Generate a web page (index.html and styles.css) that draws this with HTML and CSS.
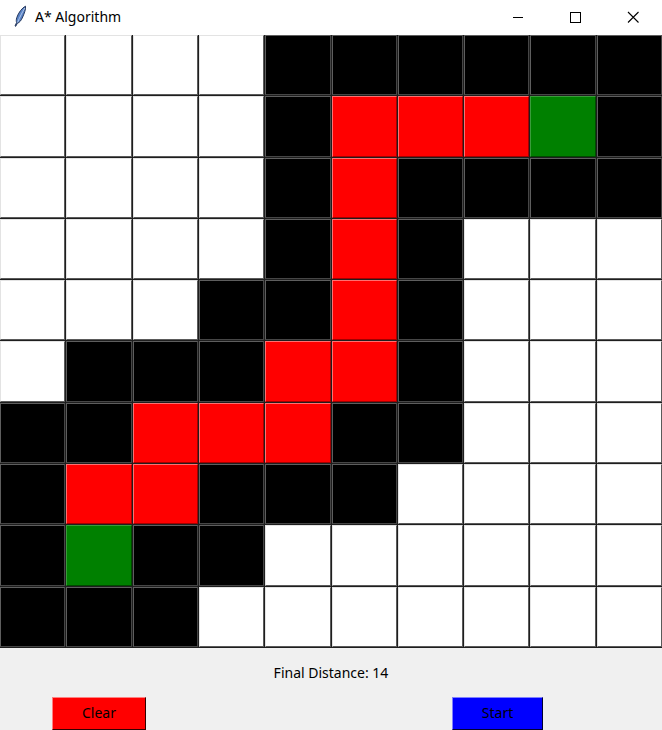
FILE: index.html
```html
<!DOCTYPE html>
<html>
<head>
<meta charset="utf-8">
<title>A* Algorithm</title>
<link rel="stylesheet" href="styles.css">
</head>
<body>
<div class="window">
  <div class="titlebar">
    <svg class="app-icon" width="16" height="22" viewBox="0 0 16 22">
      <path d="M13.5 1.2 C10 3 6.5 7.5 4.8 12.5 C4.1 14.8 4.2 16.5 4.6 17.6 L3 21 L3.7 21.3 L5.4 18.2 C7.4 17.8 9.4 15.2 10.7 12 C12.3 8.2 13.9 4.6 13.5 1.2 Z" fill="#5681c6" stroke="#27385c" stroke-width="1"/>
      <path d="M12.8 3 C10.2 7.5 7.8 12 5.6 17.4" stroke="#c9d8f0" stroke-width="0.8" fill="none"/>
    </svg>
    <span class="title">A* Algorithm</span>
    <div class="controls">
      <span class="ctl"><svg width="12" height="12" viewBox="0 0 12 12"><path d="M1 6.5 H11" stroke="#000" stroke-width="1"/></svg></span>
      <span class="ctl"><svg width="12" height="12" viewBox="0 0 12 12"><rect x="1.5" y="1.5" width="10" height="10" fill="none" stroke="#000" stroke-width="1"/></svg></span>
      <span class="ctl"><svg width="12" height="12" viewBox="0 0 12 12"><path d="M1 1 L11.5 11.5 M11.5 1 L1 11.5" stroke="#000" stroke-width="1.1"/></svg></span>
    </div>
  </div>
  <div class="grid">
    <div class="c w"></div><div class="c w"></div><div class="c w"></div><div class="c w"></div><div class="c b"></div><div class="c b"></div><div class="c b"></div><div class="c b"></div><div class="c b"></div><div class="c b"></div>
    <div class="c w"></div><div class="c w"></div><div class="c w"></div><div class="c w"></div><div class="c b"></div><div class="c r"></div><div class="c r"></div><div class="c r"></div><div class="c g"></div><div class="c b"></div>
    <div class="c w"></div><div class="c w"></div><div class="c w"></div><div class="c w"></div><div class="c b"></div><div class="c r"></div><div class="c b"></div><div class="c b"></div><div class="c b"></div><div class="c b"></div>
    <div class="c w"></div><div class="c w"></div><div class="c w"></div><div class="c w"></div><div class="c b"></div><div class="c r"></div><div class="c b"></div><div class="c w"></div><div class="c w"></div><div class="c w"></div>
    <div class="c w"></div><div class="c w"></div><div class="c w"></div><div class="c b"></div><div class="c b"></div><div class="c r"></div><div class="c b"></div><div class="c w"></div><div class="c w"></div><div class="c w"></div>
    <div class="c w"></div><div class="c b"></div><div class="c b"></div><div class="c b"></div><div class="c r"></div><div class="c r"></div><div class="c b"></div><div class="c w"></div><div class="c w"></div><div class="c w"></div>
    <div class="c b"></div><div class="c b"></div><div class="c r"></div><div class="c r"></div><div class="c r"></div><div class="c b"></div><div class="c b"></div><div class="c w"></div><div class="c w"></div><div class="c w"></div>
    <div class="c b"></div><div class="c r"></div><div class="c r"></div><div class="c b"></div><div class="c b"></div><div class="c b"></div><div class="c w"></div><div class="c w"></div><div class="c w"></div><div class="c w"></div>
    <div class="c b"></div><div class="c g"></div><div class="c b"></div><div class="c b"></div><div class="c w"></div><div class="c w"></div><div class="c w"></div><div class="c w"></div><div class="c w"></div><div class="c w"></div>
    <div class="c b"></div><div class="c b"></div><div class="c b"></div><div class="c w"></div><div class="c w"></div><div class="c w"></div><div class="c w"></div><div class="c w"></div><div class="c w"></div><div class="c w"></div>
  </div>
  <div class="panel">
    <div class="distance">Final Distance: 14</div>
    <div class="buttons">
      <button class="btn clear">Clear</button>
      <button class="btn start">Start</button>
    </div>
  </div>
</div>
</body>
</html>
```
FILE: styles.css
```css
html, body {
  margin: 0;
  padding: 0;
  background: #f0f0f0;
}
.window {
  width: 662px;
  height: 730px;
  display: flex;
  flex-direction: column;
  overflow: hidden;
  font-family: "Noto Sans", "Open Sans", sans-serif;
}
.titlebar {
  height: 35px;
  flex: none;
  background: #fff;
  display: flex;
  align-items: center;
}
.app-icon {
  margin-left: 12px;
  margin-top: -3px;
}
.title {
  margin-left: 7px;
  font-size: 14px;
  color: #000;
  margin-top: -2px;
}
.controls {
  margin-left: auto;
  display: flex;
  height: 100%;
  margin-top: -2px;
}
.ctl {
  width: 58px;
  display: flex;
  align-items: center;
  justify-content: center;
}
.controls .ctl:first-child { width: 56px; }
.grid {
  height: 613px;
  flex: none;
  display: grid;
  grid-template-columns: repeat(10, 1fr);
  grid-template-rows: repeat(10, 1fr);
  gap: 1px;
  background: #1e1e1e;
  padding: 0 0 1px 0;
  box-sizing: border-box;
}
.c {
  border: 1px solid;
  box-sizing: border-box;
}
.w {
  background: #fff;
  border-color: #e3e3e3 #5a5a5a #5a5a5a #e3e3e3;
}
.b {
  background: #000;
  border-color: #5e5e5e #464646 #464646 #5e5e5e;
}
.r {
  background: #ff0000;
  border-color: #ff7070 #a30000 #a30000 #ff7070;
}
.g {
  background: #008000;
  border-color: #3a9c3a #004a00 #004a00 #3a9c3a;
}
.panel {
  flex: 1;
  background: #f0f0f0;
  display: flex;
  flex-direction: column;
}
.distance {
  text-align: center;
  font-size: 14px;
  color: #000;
  margin-top: 15px;
  line-height: 19px;
}
.buttons {
  display: flex;
  margin-top: 15px;
}
.btn {
  height: 33px;
  font-family: "Noto Sans", "Open Sans", sans-serif;
  font-size: 14px;
  color: #000;
  border: 1px solid;
  padding: 0 0 2px 0;
  box-sizing: border-box;
}
.clear {
  margin-left: 52px;
  width: 94px;
  background: #ff0000;
  border-color: #ff8080 #300000 #300000 #ff8080;
}
.start {
  margin-left: 306px;
  width: 91px;
  background: #0000ff;
  border-color: #8080ff #000030 #000030 #8080ff;
}
```
